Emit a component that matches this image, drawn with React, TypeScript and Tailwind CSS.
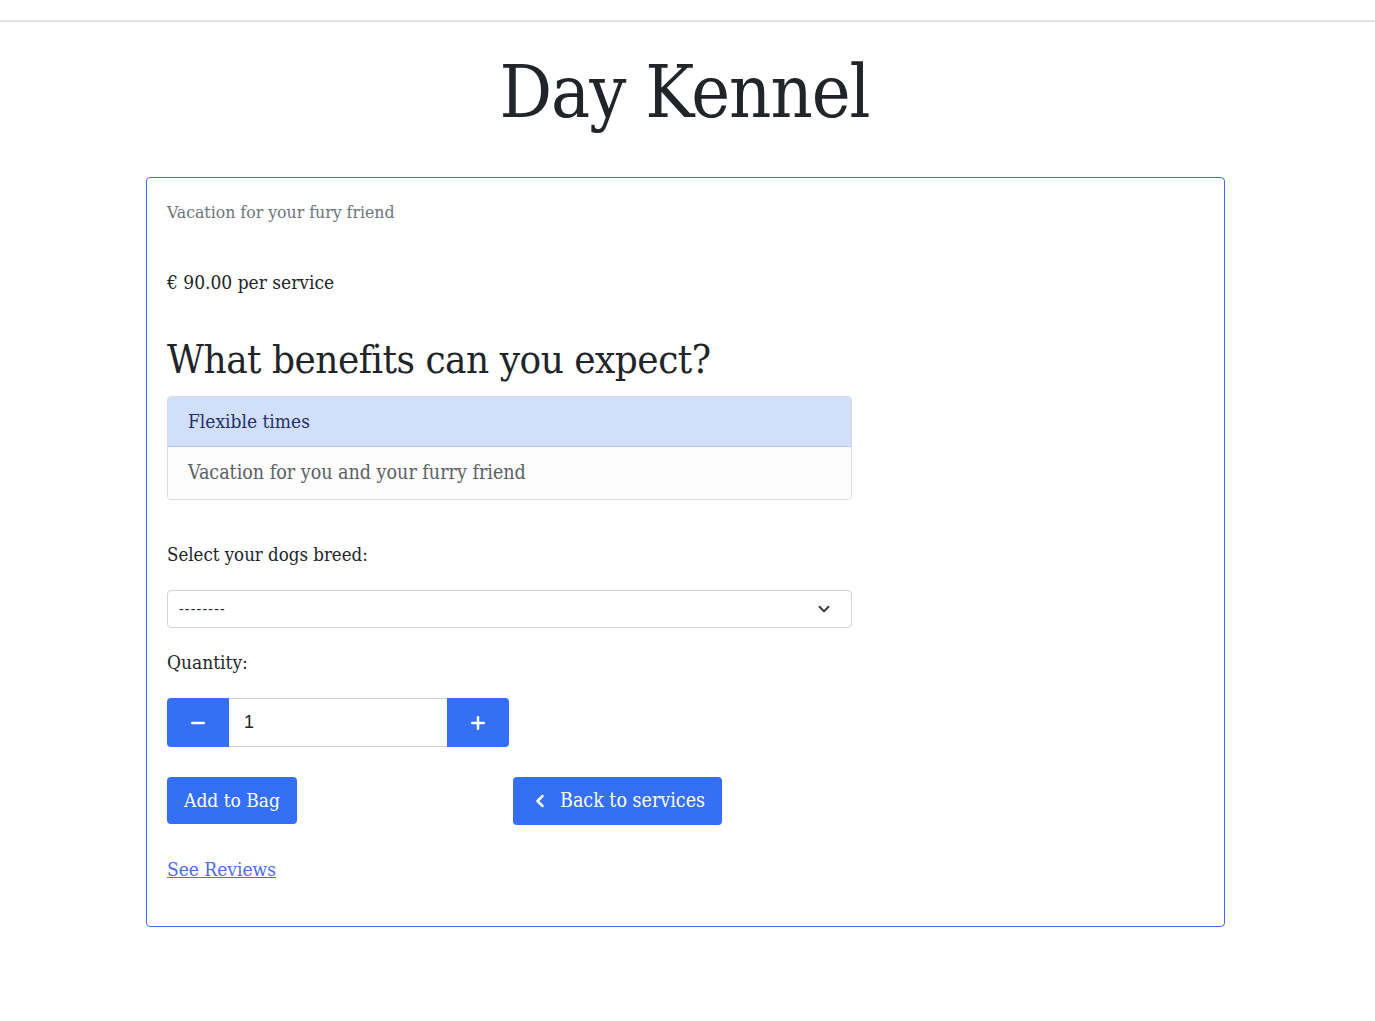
import { useState } from 'react'
import { ChevronDown, ChevronLeft, Minus, Plus } from 'lucide-react'

export default function App() {
  const [qty, setQty] = useState(1)

  return (
    <div className="min-h-screen bg-white font-['DejaVu_Serif',serif] font-stretch-condensed text-[#212529]">
      <div className="h-[22px] border-b-2 border-[#dee2e6]" />

      <h1 className="mt-[34px] pr-[6px] text-center text-[73px] leading-[72px] font-normal tracking-[-1px]">Day Kennel</h1>

      <div className="mt-[49px] ml-[146px] w-[1079px] rounded border border-[#3d6ff0] px-5 pt-[22px] pb-[43px]">
        <p className="text-[17.5px] leading-6 text-[#6c757d]">Vacation for your fury friend</p>

        <p className="mt-[46px] text-[19px] leading-6">€ 90.00 per service</p>

        <h2 className="mt-[41px] text-[40px] leading-[48px] font-normal tracking-[-0.5px]">What benefits can you expect?</h2>

        <ul className="mt-[13px] w-[685px] overflow-hidden rounded border border-[#d8dce2] text-[19px]">
          <li className="flex h-[50px] items-center border-b border-[#b6c6e6] bg-[#d1dffb] px-5 text-[#1e2f6b]">
            Flexible times
          </li>
          <li className="flex h-[52px] items-center bg-[#fcfcfc] px-5 text-[19.5px] text-[#5b6066]">
            Vacation for you and your furry friend
          </li>
        </ul>

        <label className="mt-[43px] block text-[18.5px] leading-6">Select your dogs breed:</label>

        <div className="mt-[23px] flex h-[38px] w-[685px] items-center justify-between rounded border border-[#ced4da] pr-[18px] pl-[11px]">
          <span className="font-['Liberation_Sans',sans-serif] text-[14px] tracking-[1.2px]">--------</span>
          <ChevronDown className="h-[18px] w-[18px] text-[#343a40]" strokeWidth={2.5} />
        </div>

        <p className="mt-[22px] text-[19px] leading-6">Quantity:</p>

        <div className="mt-[24px] flex h-[49px] w-[342px]">
          <button
            className="flex w-[62px] items-center justify-center rounded-l bg-[#356ff5] text-white"
            onClick={() => setQty(Math.max(1, qty - 1))}
          >
            <Minus className="h-5 w-5" strokeWidth={3} />
          </button>
          <div className="flex flex-1 items-center border-y border-[#ced4da] px-[15px] font-['Liberation_Sans',sans-serif] text-[18px]">
            {qty}
          </div>
          <button
            className="flex w-[62px] items-center justify-center rounded-r bg-[#356ff5] text-white"
            onClick={() => setQty(qty + 1)}
          >
            <Plus className="h-5 w-5" strokeWidth={3} />
          </button>
        </div>

        <div className="mt-[30px] flex items-start">
          <button className="h-[47px] w-[130px] rounded bg-[#356ff5] text-[19px] text-white">Add to Bag</button>
          <button className="ml-[216px] flex h-[48px] w-[209px] items-center justify-center gap-[10px] rounded bg-[#356ff5] text-[19.5px] text-white">
            <ChevronLeft className="h-5 w-5" strokeWidth={3} />
            <span>Back to services</span>
          </button>
        </div>

        <a href="#" className="mt-[32px] inline-block text-[19px] leading-6 text-[#4a6ee8] underline">
          See Reviews
        </a>
      </div>
    </div>
  )
}
